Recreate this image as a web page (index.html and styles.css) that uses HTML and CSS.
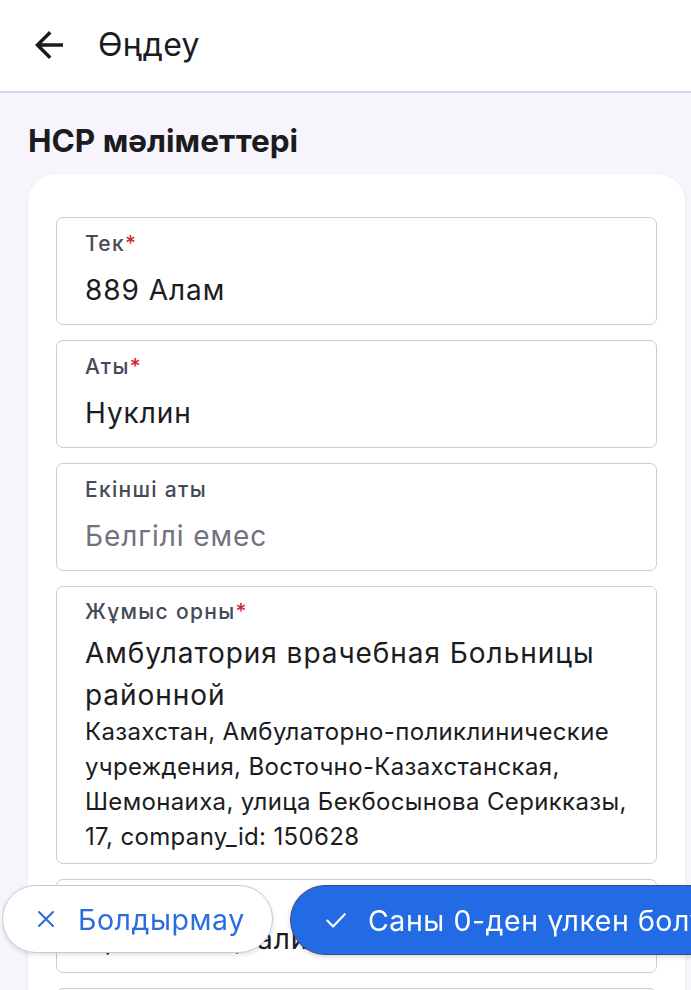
FILE: index.html
```html
<!DOCTYPE html>
<html lang="kk">
<head>
<meta charset="utf-8">
<title>Өңдеу</title>
<link rel="stylesheet" href="styles.css">
</head>
<body>
<header class="topbar">
  <span class="back">
    <svg viewBox="0 0 24 24" width="42" height="42"><path d="M20 11H7.83l5.59-5.59L12 4l-8 8 8 8 1.41-1.41L7.83 13H20v-2z" fill="#1b1c1f"/></svg>
  </span>
  <h1 class="topbar-title">Өңдеу</h1>
</header>
<main class="page">
  <h2 class="section-title">HCP мәліметтері</h2>
  <section class="card">
    <div class="field">
      <div class="label">Тек<span class="req">*</span></div>
      <div class="value">889 Алам</div>
    </div>
    <div class="field">
      <div class="label">Аты<span class="req">*</span></div>
      <div class="value">Нуклин</div>
    </div>
    <div class="field">
      <div class="label">Екінші аты</div>
      <div class="value placeholder">Белгілі емес</div>
    </div>
    <div class="field field-multi">
      <div class="label">Жұмыс орны<span class="req">*</span></div>
      <div class="value">Амбулатория врачебная Больницы районной</div>
      <div class="detail">Казахстан, Амбулаторно-поликлинические учреждения, Восточно-Казахстанская, Шемонаиха, улица Бекбосынова Серикказы, 17, company_id: 150628</div>
    </div>
    <div class="field field-compact">
      <div class="label">Мамандығы<span class="req">*</span></div>
      <div class="value">Врач-специалист</div>
    </div>
    <div class="field">
      <div class="label">Лауазымы</div>
      <div class="value">Дәрігер</div>
    </div>
  </section>
</main>
<div class="actions">
  <button class="btn btn-cancel">
    <svg viewBox="0 0 24 24" width="28" height="28"><path d="M6 6L18 18M18 6L6 18" stroke="#2a6de0" stroke-width="1.8" stroke-linecap="round" fill="none"/></svg>
    <span>Болдырмау</span>
  </button>
  <button class="btn btn-save">
    <svg viewBox="0 0 24 24" width="28" height="28"><path d="M4.5 12.5L9.5 17.5L19.5 7" stroke="#ffffff" stroke-width="1.8" stroke-linecap="round" stroke-linejoin="round" fill="none"/></svg>
    <span>Саны 0-ден үлкен болуы керек</span>
  </button>
</div>
</body>
</html>
```
FILE: styles.css
```css
* { box-sizing: border-box; }
html, body { margin: 0; padding: 0; }
body {
  background: #f7f5fb;
  font-family: "Inter", "Noto Sans", sans-serif;
  color: #1b1c1f;
  overflow: hidden;
  height: 990px;
}
.topbar {
  height: 93px;
  background: #ffffff;
  border-bottom: 2px solid #cbd7fb;
  display: flex;
  align-items: center;
  padding-left: 28px;
  padding-bottom: 2px;
}
.back { display: flex; width: 42px; height: 42px; }
.topbar-title {
  margin: 0 0 0 28px;
  font-size: 32px;
  font-weight: 400;
  letter-spacing: 0.4px;
  color: #1b1c1f;
}
.page { padding: 27px 6px 0 28px; }
.section-title {
  margin: 0 0 12px 0;
  font-size: 31.5px;
  line-height: 42px;
  font-weight: 700;
  color: #1b1c1f;
}
.card {
  background: #ffffff;
  border-radius: 28px;
  padding: 43px 28px 42px;
  display: flex;
  flex-direction: column;
  gap: 15px;
  box-shadow: 0 1px 4px rgba(40, 40, 80, 0.06);
}
.field {
  border: 1.75px solid #c9cbd9;
  border-radius: 7px;
  padding: 11.5px 26px 13px 28px;
}
.label {
  font-size: 21px;
  line-height: 28px;
  font-weight: 500;
  letter-spacing: 1.3px;
  color: #464a56;
  margin-bottom: 11.5px;
}
.req { color: #d3262b; }
.value {
  font-size: 28px;
  line-height: 42px;
  letter-spacing: 0.95px;
  color: #1b1c1f;
}
.placeholder { color: #6f7380; }
.field-multi { padding-top: 10.5px; padding-bottom: 9px; }
.field-multi .label { margin-bottom: 6px; }
.detail {
  font-size: 24px;
  line-height: 35px;
  letter-spacing: 0.35px;
  color: #1b1c1f;
  margin-top: -2px;
}
.field-compact { padding-top: 10.5px; padding-bottom: 12px; }
.field-compact .label { margin-bottom: 0; }
.actions {
  position: fixed;
  left: 2px;
  top: 885px;
  right: 0;
  display: flex;
  gap: 17px;
  overflow: hidden;
  padding: 0 0 6px 0;
}
.btn {
  flex: none;
  height: 68px;
  border-radius: 34px;
  display: flex;
  align-items: center;
  font-family: "Inter", "Noto Sans", sans-serif;
  font-size: 28.5px;
  letter-spacing: 0.55px;
  white-space: nowrap;
}
.btn-cancel {
  width: 271px;
  background: #ffffff;
  border: 1.75px solid #c7c9d6;
  color: #2a6de0;
  padding: 0 0 0 29px;
  gap: 18px;
  box-shadow: 0 2px 5px rgba(0, 0, 0, 0.12);
}
.btn-save {
  width: 520px;
  height: 70px;
  border-radius: 35px;
  background: #236be4;
  border: 1px solid #3f4f73;
  color: #ffffff;
  padding: 0 0 0 31px;
  gap: 18px;
  box-shadow: 0 2px 5px rgba(0, 0, 0, 0.15);
}
.btn svg { flex: none; }
```
